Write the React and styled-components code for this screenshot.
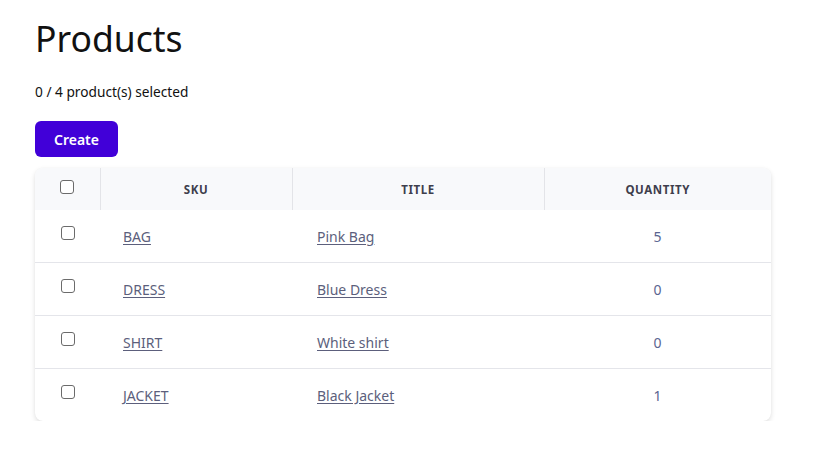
import React from "react";
import styled, { createGlobalStyle } from "styled-components";

const Global = createGlobalStyle`
  html, body { margin: 0; padding: 0; background: #ffffff; }
  body { font-family: "Noto Sans", "Open Sans", sans-serif; color: #111111; }
`;

const Page = styled.main`
  padding: 14px 63px 0 35px;
`;

const Title = styled.h1`
  margin: 0;
  font-size: 35.5px;
  font-weight: 400;
  line-height: 48px;
  color: #111;
`;

const Count = styled.p`
  margin: 18px 0 0;
  font-size: 13.7px;
  line-height: 24px;
`;

const Button = styled.button`
  margin-top: 17px;
  height: 36px;
  width: 83px;
  border: none;
  border-radius: 6px;
  background: #4100d8;
  color: #fff;
  font-family: inherit;
  font-size: 14px;
  font-weight: 600;
`;

const Card = styled.div`
  margin-top: 11px;
  width: 736px;
  border-radius: 8px;
  box-shadow: 0 2px 5px rgba(0, 0, 0, 0.13), 0 0 1px rgba(0, 0, 0, 0.06);
  overflow: hidden;
`;

const Table = styled.table`
  width: 100%;
  border-collapse: collapse;
  table-layout: fixed;
`;

const Th = styled.th`
  height: 42px;
  padding: 0;
  background: #f8f9fb;
  font-size: 11.5px;
  font-weight: 700;
  letter-spacing: 0.6px;
  text-transform: uppercase;
  color: #3e3e4c;
  text-align: center;
  border-left: ${(p) => (p.$first ? "none" : "1px solid #e3e4e8")};
`;

const Tr = styled.tr`
  border-top: ${(p) => (p.$first ? "none" : "1px solid #e4e5ea")};
`;

const Td = styled.td`
  height: 52px;
  padding: 0 0 0 ${(p) => p.$pad || 0}px;
  font-size: 14px;
  text-align: ${(p) => (p.$center ? "center" : "left")};
  color: #5a6590;
`;

const Check = styled.input.attrs({ type: "checkbox" })`
  width: 14px;
  height: 14px;
  appearance: none;
  border: 1px solid #6b6b6b;
  border-radius: 3px;
  background: #fff;
  display: block;
  margin: ${(p) => (p.$row ? "-6px" : "-4px")} auto 0;
`;

const Link = styled.a`
  color: #5c5f7c;
  text-decoration: underline;
  text-underline-offset: 2px;
`;

const rows = [
  { sku: "BAG", title: "Pink Bag", qty: 5 },
  { sku: "DRESS", title: "Blue Dress", qty: 0 },
  { sku: "SHIRT", title: "White shirt", qty: 0 },
  { sku: "JACKET", title: "Black Jacket", qty: 1 },
];

export default function App() {
  return (
    <>
      <Global />
      <Page>
        <Title>Products</Title>
        <Count>0 / 4 product(s) selected</Count>
        <Button>Create</Button>
        <Card>
          <Table>
            <colgroup>
              <col style={{ width: 65 }} />
              <col style={{ width: 192 }} />
              <col style={{ width: 252 }} />
              <col style={{ width: 227 }} />
            </colgroup>
            <thead>
              <tr>
                <Th $first>
                  <Check />
                </Th>
                <Th>SKU</Th>
                <Th>Title</Th>
                <Th>Quantity</Th>
              </tr>
            </thead>
            <tbody>
              {rows.map((r, i) => (
                <Tr key={r.sku} $first={i === 0}>
                  <Td>
                    <Check $row />
                  </Td>
                  <Td $pad={23}>
                    <Link href="#">{r.sku}</Link>
                  </Td>
                  <Td $pad={25}>
                    <Link href="#">{r.title}</Link>
                  </Td>
                  <Td $center>{r.qty}</Td>
                </Tr>
              ))}
            </tbody>
          </Table>
        </Card>
      </Page>
    </>
  );
}
